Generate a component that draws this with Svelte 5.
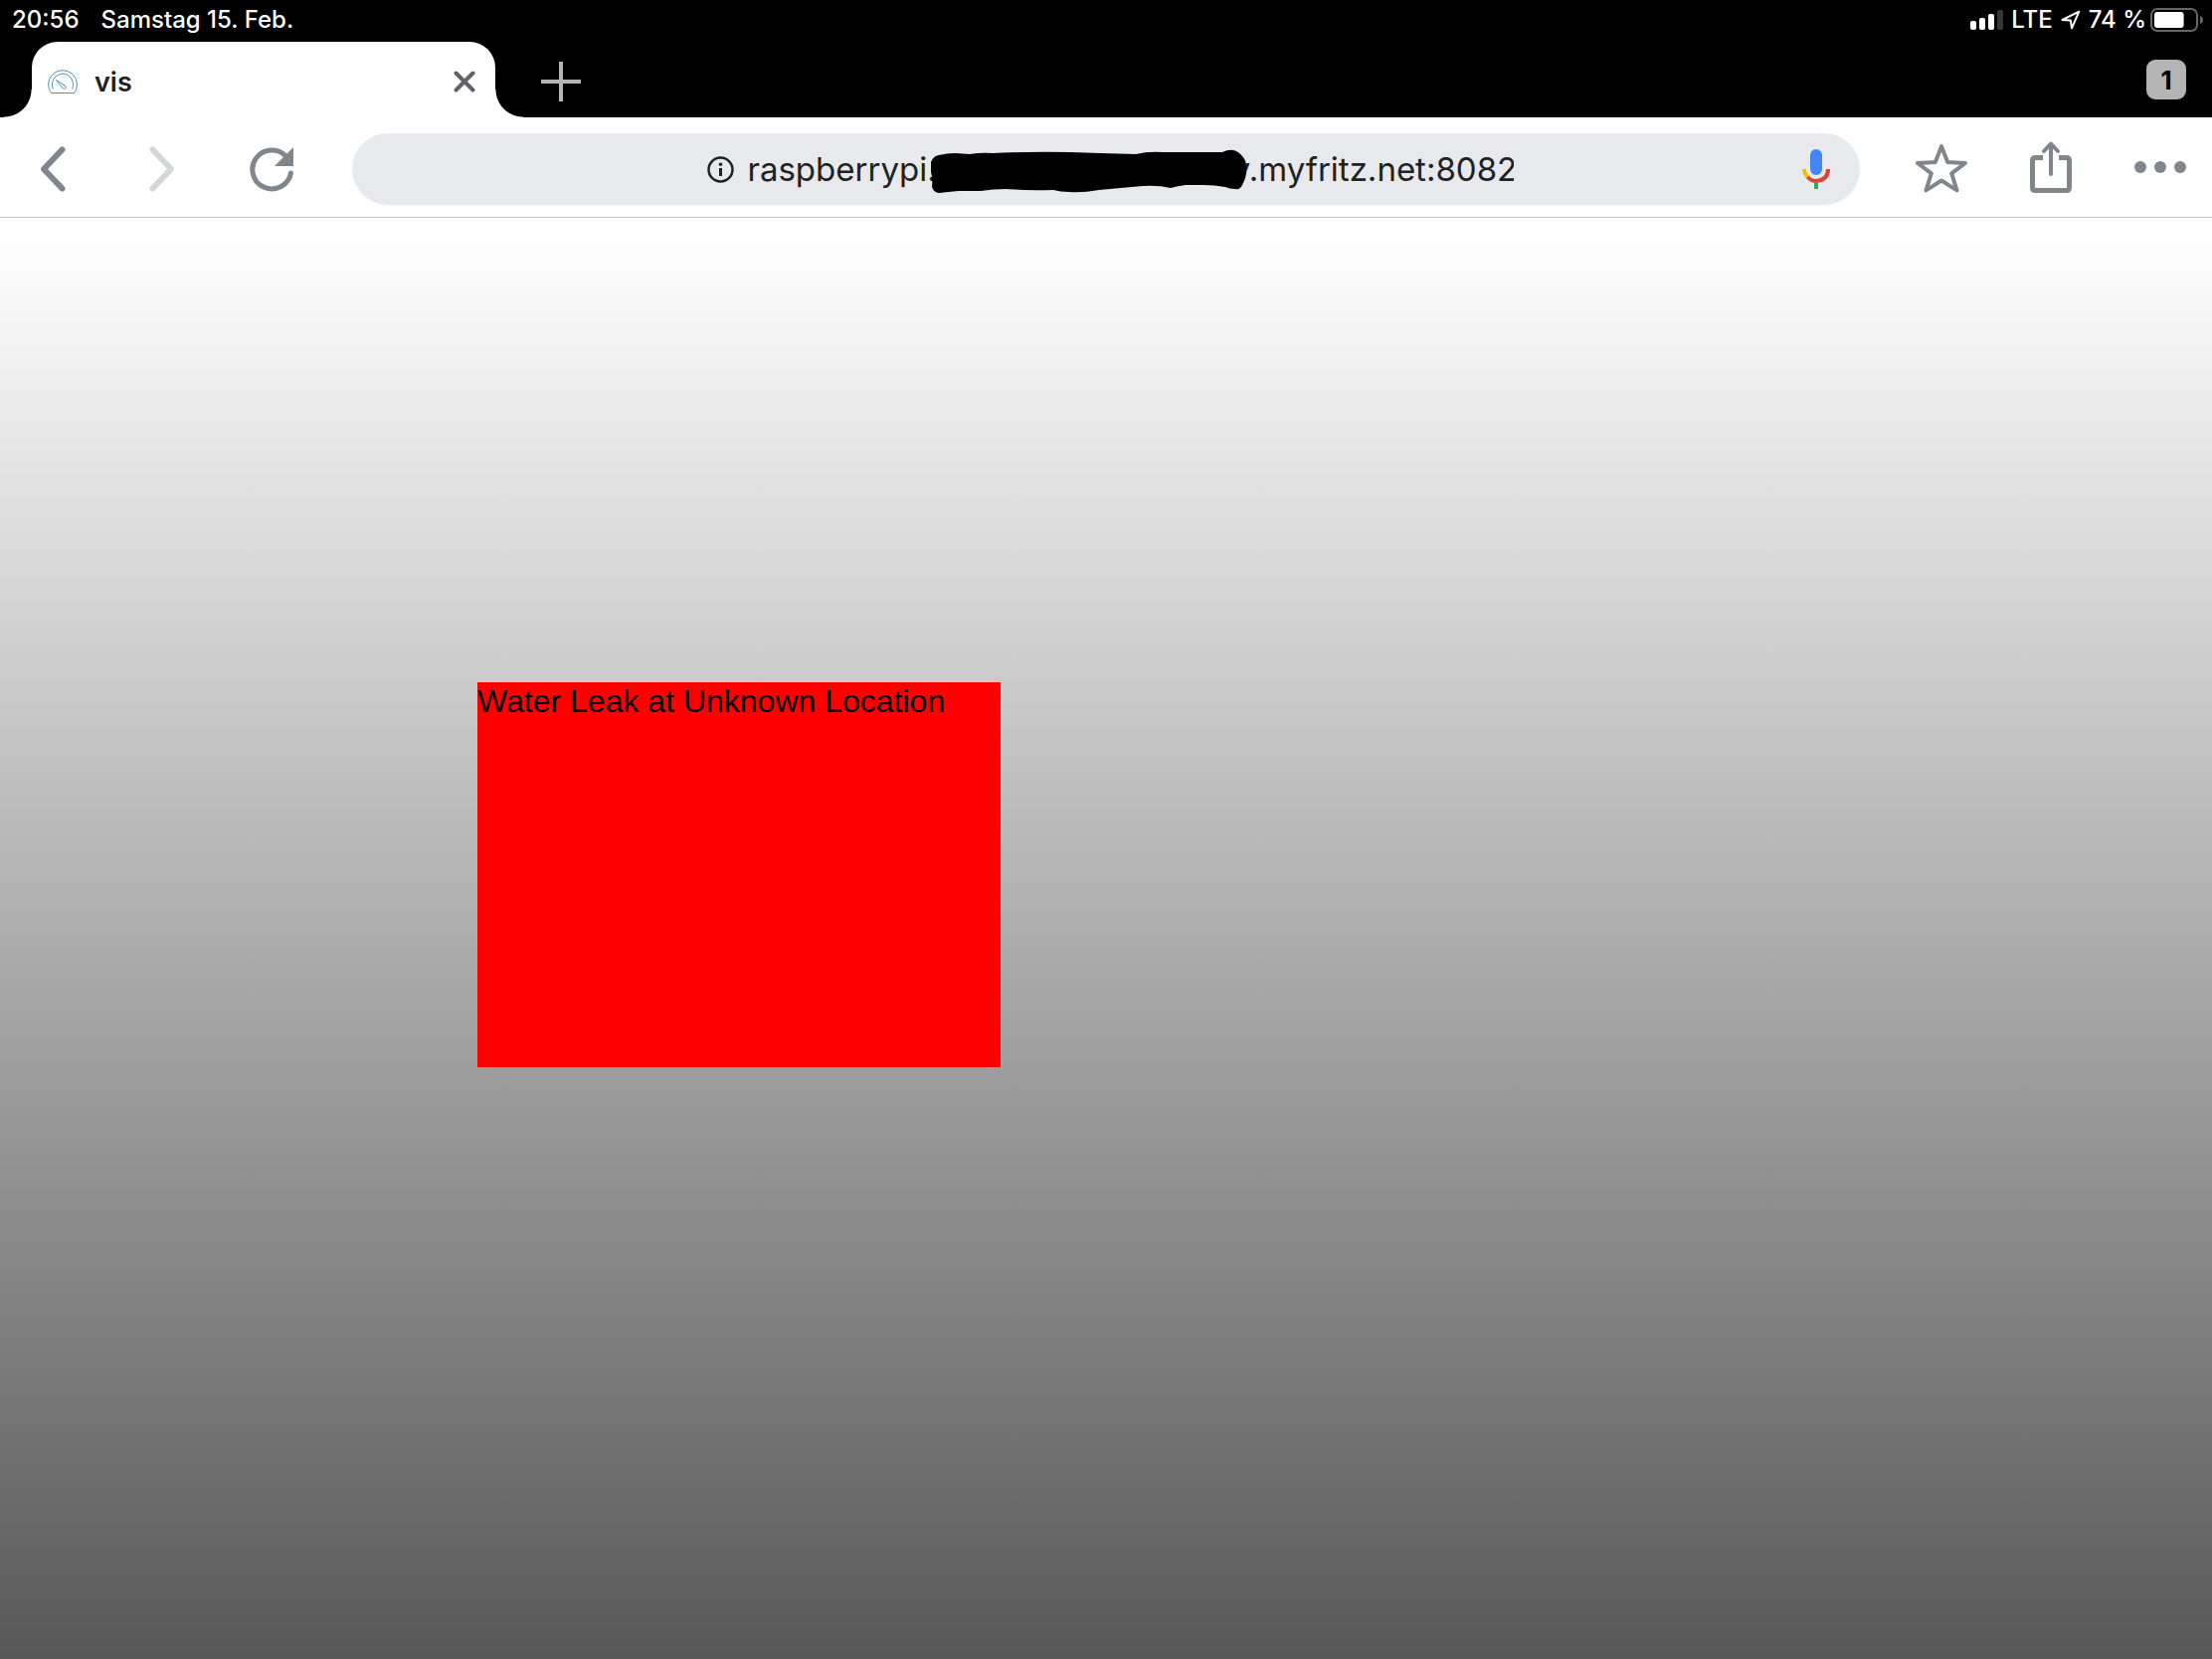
<script lang="ts">
	// the middle of the host name is blacked out, so it is only blank space here
	const REDACTED = '\u2003'.repeat(9);

	const time = '20:56';
	const date = 'Samstag 15. Feb.';
	const battery = 74;
	const signal = [
		{ height: 9, on: true },
		{ height: 12, on: true },
		{ height: 16, on: true },
		{ height: 20, on: false }
	];

	let url = $state(`raspberrypi.${REDACTED}y.myfritz.net:8082`);
	let tabs = $state([{ id: 1, title: 'vis' }]);
</script>

<div class="screen">
	<header>
		<div class="status">
			<time>{time}</time>
			<span>{date}</span>
			<div class="system">
				<svg class="signal" width="33" height="20" viewBox="0 0 33 20" aria-hidden="true">
					{#each signal as bar, i (i)}
						<rect
							x={i * 9}
							y={20 - bar.height}
							width="6"
							height={bar.height}
							rx="2"
							fill={bar.on ? '#fff' : '#363636'}
						/>
					{/each}
				</svg>
				<span>LTE</span>
				<svg class="location" width="20" height="20" viewBox="0 0 20 20" aria-hidden="true">
					<path d="M1.5 10 18.3 1.7 11 18.3 9.8 10.4Z" />
				</svg>
				<span>{battery} %</span>
				<svg class="battery" width="54" height="24" viewBox="0 0 54 24" aria-hidden="true">
					<rect x="1" y="1" width="46" height="22" rx="6" fill="none" stroke="#666" stroke-width="2" />
					<rect x="4" y="4" width={(battery / 100) * 40} height="16" rx="3" fill="#fff" />
					<path d="M50 8q3 1 3 4t-3 4z" fill="#666" />
				</svg>
			</div>
		</div>

		<div class="tabs">
			{#each tabs as tab (tab.id)}
				<div class="tab">
					<svg width="30" height="25" viewBox="0 0 30 25" fill="none" stroke="#4f8fbf" aria-hidden="true">
						<path d="M3.5 23.5C1.5 21 .7 18 .7 15 .7 7 7 .8 15 .8S29.300 7 29.300 15c0 3-.8 6-2.800 8.500z" />
						<path d="M5.2 19.5C2.5 11 8 4.2 15 4.2s12.5 6.800 9.8 15.300" />
						<path d="M8.5 10.5l8.8 5.5c1.5 1 1 3.5-.8 3.5-1 0-1.500-.5-2-1.300z" />
					</svg>
					<span>{tab.title}</span>
					<button class="close" aria-label="Tab schließen">
						<svg width="22" height="22" viewBox="0 0 22 22">
							<path d="M2.5 2.5l17 17m0-17l-17 17" stroke="#5f6368" stroke-width="4" stroke-linecap="round" />
						</svg>
					</button>
				</div>
			{/each}
			<button class="add" aria-label="Neuer Tab">
				<svg width="40" height="40" viewBox="0 0 40 40">
					<path d="M20 0v40M0 20h40" stroke="#b4b4b4" stroke-width="4" />
				</svg>
			</button>
			<button class="count" aria-label="Offene Tabs">{tabs.length}</button>
		</div>
	</header>

	<nav class="toolbar">
		<div class="group">
			<button aria-label="Zurück">
				<svg width="26" height="46" viewBox="0 0 26 46">
					<path d="M22.5 3.5 4 23l18.5 19.5" stroke-width="6" stroke-linecap="round" />
				</svg>
			</button>
			<button aria-label="Vorwärts" disabled>
				<svg width="26" height="46" viewBox="0 0 26 46">
					<path d="M3.5 3.5 22 23 3.5 42.5" stroke-width="6" stroke-linecap="round" />
				</svg>
			</button>
			<button aria-label="Neu laden">
				<svg width="46" height="46" viewBox="0 0 46 46">
					<path d="M42.500 27A19.500 19.500 0 1 1 37.500 10" stroke-width="5" stroke-linecap="round" />
					<path class="solid" d="M45 1v19H26z" />
				</svg>
			</button>
		</div>

		<div class="omnibox">
			<div class="address">
				<svg width="27" height="27" viewBox="0 0 27 27" aria-hidden="true">
					<circle cx="13.5" cy="13.5" r="12" fill="none" stroke="#202124" stroke-width="2.5" />
					<path d="M13.5 12v8" stroke="#202124" stroke-width="3" />
					<circle cx="13.5" cy="8.3" r="1.8" fill="#202124" />
				</svg>
				<div class="url">
					<input type="text" aria-label="Adresse" spellcheck="false" bind:value={url} />
					<svg class="redaction" width="320" height="48" viewBox="0 0 320 48" aria-hidden="true">
						<path
							d="M2 14Q4 8 10 7Q18 5 26 5L41 6Q52 4 65 5Q105 3 141 4L172 5L208 6Q220 3 235 4L295 4Q301 1 306 2Q311 3 315 8Q319 12 319 19Q320 28 315 37Q313 42 308 41Q302 41 298 39Q287 37 276 37L258 37Q250 38 243 40Q230 37 215 38Q192 40 171 42Q154 45 141 44Q132 44 125 42Q100 43 78 41Q64 41 52 43L30 43Q18 44 11 45Q5 45 3 39Q4 30 2 24Z"
						/>
					</svg>
				</div>
			</div>
			<button class="mic" aria-label="Sprachsuche">
				<svg width="28" height="40" viewBox="0 0 28 40" fill="none">
					<rect x="8" y="0" width="12" height="26" rx="6" fill="#4285f4" />
					<path d="M2 20q0 5 4 8.500" stroke="#fbbc05" stroke-width="4" />
					<path d="M5.5 28Q9 32 14 32 26 31 26 20" stroke="#db4437" stroke-width="4" />
					<path d="M14 34v6" stroke="#34a853" stroke-width="4" />
				</svg>
			</button>
		</div>

		<div class="group actions">
			<button aria-label="Lesezeichen">
				<svg width="54" height="52" viewBox="0 0 54 52">
					<path
						d="M27 5l6.200 16.100 17.800.9-13.800 10.400 5.300 17L27 39.500l-15.500 9.900 5.300-17L3 22l17.800-.9z"
						stroke-width="4"
					/>
				</svg>
			</button>
			<button aria-label="Teilen">
				<svg width="42" height="52" viewBox="0 0 42 52">
					<path d="M13 16.5H5.5q-3 0-3 3v27q0 3 3 3h31q3 0 3-3v-27q0-3-3-3H29" stroke-width="5" />
					<path d="M21 33V3M14 10l7-7.500 7 7.500" stroke-width="4" stroke-linecap="round" />
				</svg>
			</button>
			<button aria-label="Menü">
				<svg width="52" height="12" viewBox="0 0 52 12">
					<circle class="solid" cx="6" cy="6" r="6" />
					<circle class="solid" cx="26" cy="6" r="6" />
					<circle class="solid" cx="46" cy="6" r="6" />
				</svg>
			</button>
		</div>
	</nav>

	<main>
		<div class="alarm">Water Leak at Unknown Location</div>
	</main>
</div>

<style>
	.screen {
		display: flex;
		flex-direction: column;
		min-height: 100vh;
		font-family: Inter, 'Liberation Sans', sans-serif;
		color: #202124;
	}

	button {
		display: flex;
		align-items: center;
		justify-content: center;
		padding: 0;
		border: 0;
		background: none;
		font: inherit;
		color: inherit;
	}

	svg {
		display: block;
		flex: none;
	}

	header {
		background: #000;
	}

	.status {
		display: flex;
		align-items: center;
		height: 40px;
		padding: 0 8px 0 12px;
		gap: 22px;
		color: #fff;
		font-size: 24px;
		font-weight: 500;
		line-height: 40px;
	}

	.system {
		display: flex;
		align-items: center;
		gap: 8px;
		margin-left: auto;
	}

	.battery {
		margin-left: -4px;
	}

	.location path {
		fill: none;
		stroke: #fff;
		stroke-width: 2;
		stroke-linejoin: round;
	}

	.tabs {
		display: flex;
		align-items: center;
		height: 76px;
		margin-top: 2px;
		padding: 0 26px 0 32px;
	}

	.tab {
		position: relative;
		display: flex;
		align-items: center;
		box-sizing: border-box;
		width: 466px;
		height: 76px;
		padding: 4px 20px 0 16px;
		border-radius: 26px 26px 0 0;
		background: #fff;
		font-size: 27px;
		font-weight: 600;
	}

	.tab span {
		margin-left: 17px;
	}

	/* flared feet on both sides of the tab */
	.tab::before,
	.tab::after {
		content: '';
		position: absolute;
		bottom: 0;
		width: 28px;
		height: 28px;
	}

	.tab::before {
		right: 100%;
		background: radial-gradient(circle at 0 0, transparent 27px, #fff 28px);
	}

	.tab::after {
		left: 100%;
		background: radial-gradient(circle at 100% 0, transparent 27px, #fff 28px);
	}

	.close {
		margin-left: auto;
	}

	.add {
		margin: 4px 0 0 46px;
	}

	.count {
		width: 40px;
		height: 40px;
		margin-left: auto;
		border-radius: 9px;
		background: #b4b4b4;
		color: #000;
		font-size: 26px;
		font-weight: 700;
	}

	.toolbar {
		display: flex;
		align-items: center;
		height: 100px;
		border-bottom: 1px solid #c6c7c9;
		background: #fff;
	}

	.group {
		display: flex;
		align-items: center;
		box-sizing: border-box;
		flex: none;
		gap: 26px;
		width: 354px;
		padding: 4px 0 0 11px;
	}

	.group.actions {
		padding: 0 0 0 40px;
	}

	.group button {
		flex: none;
		width: 84px;
		height: 84px;
	}

	.group path {
		fill: none;
		stroke: #80868b;
		stroke-linejoin: round;
	}

	.group :disabled path {
		stroke: #d5d6d8;
	}

	.group .solid {
		fill: #80868b;
		stroke: none;
	}

	.omnibox {
		display: grid;
		grid-template-columns: 1fr auto 1fr;
		align-items: center;
		flex: 1;
		height: 72px;
		margin-top: 4px;
		padding-left: 8px;
		border-radius: 36px;
		background: #e7e9ec;
	}

	.address {
		display: flex;
		align-items: center;
		grid-column: 2;
		gap: 14px;
	}

	.url {
		position: relative;
	}

	input {
		display: block;
		width: 770px;
		height: 44px;
		padding: 0;
		border: 0;
		outline: 0;
		background: none;
		color: inherit;
		font: 400 33px Inter, 'Liberation Sans', sans-serif;
	}

	.redaction {
		position: absolute;
		top: 1px;
		left: 182px;
	}

	.omnibox .mic {
		justify-self: end;
		margin-right: 30px;
	}

	main {
		flex: 1;
		padding: 467px 0 0 480px;
		background: linear-gradient(#fff, #fff 16px, #585858);
	}

	.alarm {
		width: 526px;
		height: 387px;
		background: #f00;
		color: #000;
		font: 32px/38px 'Liberation Sans', Arial, sans-serif;
	}
</style>
